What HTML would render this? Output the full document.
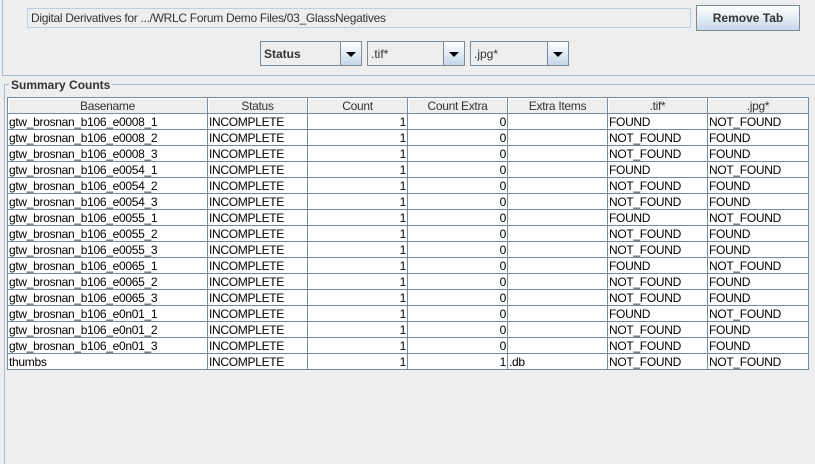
<!DOCTYPE html>
<html><head><style>
body{margin:0;width:815px;height:463px;background:#eeeeee;position:relative;overflow:hidden;font-family:"Liberation Sans",Arial,sans-serif;font-size:12px;color:#000}
.a{position:absolute;box-sizing:border-box}
table{border-collapse:collapse;table-layout:fixed;position:absolute;left:7px;top:97px;width:801px}
td,th{border:1px solid #7a8a99;height:15px;padding:0 1px;line-height:14px;white-space:nowrap;overflow:hidden;font-weight:normal;font-size:12px;letter-spacing:-0.3px}
th{background:#eeeeee;text-align:center;color:#333;box-shadow:inset 1px 1px 0 #fff}
td{background:#fff}
td.r{text-align:right}
.cb{position:absolute;top:41px;height:25px;border:1px solid #7a8a99;background:#eeeeee;box-sizing:border-box}
.cb span{position:absolute;left:3px;top:5px;color:#333}
.cb i{position:absolute;right:0;top:0;bottom:0;width:20px;border-left:1px solid #7a8a99;background:linear-gradient(#fff,#dde8f3 60%,#c5d6e8)}
.cb i:after{content:"";position:absolute;left:5px;top:10px;border-left:5px solid transparent;border-right:5px solid transparent;border-top:5px solid #000}
</style></head><body>
<div class="a" style="left:2px;top:0;width:1px;height:76px;background:#a3bdd8"></div>
<div class="a" style="left:2px;top:75px;width:813px;height:1px;background:#a3bdd8"></div>
<div class="a" style="left:27px;top:8px;width:664px;height:20px;border:1px solid #b8cfe5;background:#eeeeee;padding:2px 0 0 3px;color:#333;letter-spacing:-0.3px">Digital Derivatives for .../WRLC Forum Demo Files/03_GlassNegatives</div>
<div class="a" style="left:696px;top:5px;width:104px;height:26px;border:1px solid #7a8a99;background:linear-gradient(#fff,#dde8f3 60%,#c5d6e8);text-align:center;line-height:24px;font-weight:bold;color:#333">Remove Tab</div>
<div class="cb" style="left:260px;width:102px"><span style="font-weight:bold">Status</span><i></i></div>
<div class="cb" style="left:367px;width:98px"><span>.tif*</span><i></i></div>
<div class="cb" style="left:470px;width:99px"><span>.jpg*</span><i></i></div>
<div class="a" style="left:4px;top:84px;width:812px;height:380px;border-left:1px solid #a3bdd8;border-top:1px solid #a3bdd8"></div>
<div class="a" style="left:9px;top:77px;background:#eeeeee;padding:0 2px;font-weight:bold;color:#333;line-height:16px">Summary Counts</div>
<table>
<colgroup><col style="width:200px"><col style="width:100px"><col style="width:100px"><col style="width:100px"><col style="width:100px"><col style="width:100px"><col style="width:101px"></colgroup>
<tr><th>Basename</th><th>Status</th><th>Count</th><th>Count Extra</th><th>Extra Items</th><th>.tif*</th><th>.jpg*</th></tr>
<tr><td>gtw_brosnan_b106_e0008_1</td><td>INCOMPLETE</td><td class="r">1</td><td class="r">0</td><td></td><td>FOUND</td><td>NOT_FOUND</td></tr>
<tr><td>gtw_brosnan_b106_e0008_2</td><td>INCOMPLETE</td><td class="r">1</td><td class="r">0</td><td></td><td>NOT_FOUND</td><td>FOUND</td></tr>
<tr><td>gtw_brosnan_b106_e0008_3</td><td>INCOMPLETE</td><td class="r">1</td><td class="r">0</td><td></td><td>NOT_FOUND</td><td>FOUND</td></tr>
<tr><td>gtw_brosnan_b106_e0054_1</td><td>INCOMPLETE</td><td class="r">1</td><td class="r">0</td><td></td><td>FOUND</td><td>NOT_FOUND</td></tr>
<tr><td>gtw_brosnan_b106_e0054_2</td><td>INCOMPLETE</td><td class="r">1</td><td class="r">0</td><td></td><td>NOT_FOUND</td><td>FOUND</td></tr>
<tr><td>gtw_brosnan_b106_e0054_3</td><td>INCOMPLETE</td><td class="r">1</td><td class="r">0</td><td></td><td>NOT_FOUND</td><td>FOUND</td></tr>
<tr><td>gtw_brosnan_b106_e0055_1</td><td>INCOMPLETE</td><td class="r">1</td><td class="r">0</td><td></td><td>FOUND</td><td>NOT_FOUND</td></tr>
<tr><td>gtw_brosnan_b106_e0055_2</td><td>INCOMPLETE</td><td class="r">1</td><td class="r">0</td><td></td><td>NOT_FOUND</td><td>FOUND</td></tr>
<tr><td>gtw_brosnan_b106_e0055_3</td><td>INCOMPLETE</td><td class="r">1</td><td class="r">0</td><td></td><td>NOT_FOUND</td><td>FOUND</td></tr>
<tr><td>gtw_brosnan_b106_e0065_1</td><td>INCOMPLETE</td><td class="r">1</td><td class="r">0</td><td></td><td>FOUND</td><td>NOT_FOUND</td></tr>
<tr><td>gtw_brosnan_b106_e0065_2</td><td>INCOMPLETE</td><td class="r">1</td><td class="r">0</td><td></td><td>NOT_FOUND</td><td>FOUND</td></tr>
<tr><td>gtw_brosnan_b106_e0065_3</td><td>INCOMPLETE</td><td class="r">1</td><td class="r">0</td><td></td><td>NOT_FOUND</td><td>FOUND</td></tr>
<tr><td>gtw_brosnan_b106_e0n01_1</td><td>INCOMPLETE</td><td class="r">1</td><td class="r">0</td><td></td><td>FOUND</td><td>NOT_FOUND</td></tr>
<tr><td>gtw_brosnan_b106_e0n01_2</td><td>INCOMPLETE</td><td class="r">1</td><td class="r">0</td><td></td><td>NOT_FOUND</td><td>FOUND</td></tr>
<tr><td>gtw_brosnan_b106_e0n01_3</td><td>INCOMPLETE</td><td class="r">1</td><td class="r">0</td><td></td><td>NOT_FOUND</td><td>FOUND</td></tr>
<tr><td>thumbs</td><td>INCOMPLETE</td><td class="r">1</td><td class="r">1</td><td>.db</td><td>NOT_FOUND</td><td>NOT_FOUND</td></tr>
</table>
</body></html>
